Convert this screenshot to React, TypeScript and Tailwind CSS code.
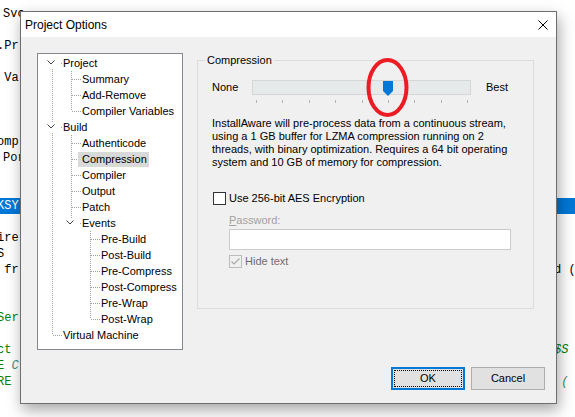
import React from "react";

type Conn = "first" | "tee" | "elbow";
type Row = { label: string; cells: ("pipe" | "blank")[]; conn: Conn; exp?: boolean; selected?: boolean };

const rows: Row[] = [
  { label: "Project", cells: [], conn: "first", exp: true },
  { label: "Summary", cells: ["pipe"], conn: "tee" },
  { label: "Add-Remove", cells: ["pipe"], conn: "tee" },
  { label: "Compiler Variables", cells: ["pipe"], conn: "elbow" },
  { label: "Build", cells: [], conn: "tee", exp: true },
  { label: "Authenticode", cells: ["pipe"], conn: "tee" },
  { label: "Compression", cells: ["pipe"], conn: "tee", selected: true },
  { label: "Compiler", cells: ["pipe"], conn: "tee" },
  { label: "Output", cells: ["pipe"], conn: "tee" },
  { label: "Patch", cells: ["pipe"], conn: "tee" },
  { label: "Events", cells: ["pipe"], conn: "elbow", exp: true },
  { label: "Pre-Build", cells: ["pipe", "blank"], conn: "tee" },
  { label: "Post-Build", cells: ["pipe", "blank"], conn: "tee" },
  { label: "Pre-Compress", cells: ["pipe", "blank"], conn: "tee" },
  { label: "Post-Compress", cells: ["pipe", "blank"], conn: "tee" },
  { label: "Pre-Wrap", cells: ["pipe", "blank"], conn: "tee" },
  { label: "Post-Wrap", cells: ["pipe", "blank"], conn: "elbow" },
  { label: "Virtual Machine", cells: [], conn: "elbow" },
];

const vDots =
  "bg-[repeating-linear-gradient(to_bottom,#a0a0a0_0px,#a0a0a0_1px,transparent_1px,transparent_2px)]";
const hDots =
  "bg-[repeating-linear-gradient(to_right,#a0a0a0_0px,#a0a0a0_1px,transparent_1px,transparent_2px)]";

function Cell({ kind }: { kind: "pipe" | "blank" }) {
  return (
    <div className="relative w-[19px] h-[16px] shrink-0">
      {kind === "pipe" && <div className={`absolute left-[9px] top-0 w-[1px] h-[16px] ${vDots}`} />}
    </div>
  );
}

function Connector({ conn, exp }: { conn: Conn; exp?: boolean }) {
  const top = conn === "tee" || conn === "elbow";
  const bottom = conn === "tee" || conn === "first";
  return (
    <div className="relative w-[19px] h-[16px] shrink-0">
      {top && <div className={`absolute left-[9px] top-0 w-[1px] h-[8px] ${vDots}`} />}
      {bottom && <div className={`absolute left-[9px] top-[8px] w-[1px] h-[8px] ${vDots}`} />}
      {!exp && <div className={`absolute left-[10px] top-[8px] w-[9px] h-[1px] ${hDots}`} />}
      {exp && (
        <>
          <div className="absolute left-[3px] top-[3px] w-[12px] h-[10px] bg-white">
            <svg className="absolute left-[1px] top-[2px]" width="8" height="5" viewBox="0 0 8 5">
              <path d="M0.5 0.5 L4 4 L7.5 0.5" fill="none" stroke="#404040" strokeWidth="1" />
            </svg>
          </div>
          <div className="absolute left-[18px] top-[8px] w-[1px] h-[1px] bg-[#a0a0a0]" />
        </>
      )}
    </div>
  );
}

function Tree() {
  return (
    <div className="w-[146px] h-[297px] shrink-0 border border-[#828790] bg-white pt-[1px] pl-[5px]">
      {rows.map((r) => (
        <div key={r.label} className="flex items-start h-[16px]">
          {r.cells.map((c, i) => (
            <Cell key={i} kind={c} />
          ))}
          <Connector conn={r.conn} exp={r.exp} />
          <span
            className={`relative ml-[-3px] mt-[1px] h-[15px] leading-[14px] pl-[4px] pr-[2px] whitespace-nowrap text-black ${
              r.selected ? "bg-[#d9d9d9]" : ""
            }`}
          >
            {r.label}
          </span>
        </div>
      ))}
    </div>
  );
}

const codeLines: { l: string; r?: string; lc?: string; rc?: string; hl?: boolean; ml?: string }[] = [
  { l: "Svc", ml: "ml-[3px]" },
  { l: "" },
  { l: ".Pr" },
  { l: "" },
  { l: " Va" },
  { l: "" },
  { l: "" },
  { l: "" },
  { l: "omp" },
  { l: "Por", ml: "ml-[3px]" },
  { l: "" },
  { l: "" },
  { l: "KSY", hl: true },
  { l: "" },
  { l: "ire" },
  { l: "S" },
  { l: " fr", r: "d (" },
  { l: "" },
  { l: "" },
  { l: "Ser", lc: "text-[#008000]" },
  { l: "" },
  { l: "ct", lc: "text-[#008000]", r: "$S", rc: "text-[#008000] italic" },
  { l: "E C", lc: "text-[#008000]" },
  { l: "RE", lc: "text-[#008000]", r: " (", rc: "text-[#3c8c6c] italic" },
];

function CodeBackground() {
  return (
    <div className="absolute inset-0 overflow-hidden bg-white pt-[6px] text-[12px] leading-[16px] font-['Liberation_Mono',monospace] text-black">
      {codeLines.map((c, i) => (
        <div key={i} className={`flex h-[16px] whitespace-pre ${c.hl ? "bg-[#0078d7] text-white" : ""}`}>
          <span className={`w-[557px] shrink-0 overflow-hidden ${c.ml ? c.ml : "ml-[-3px]"} ${c.lc ?? ""}`}>
            {c.l === "E C" ? (
              <>
                E <span className="italic text-[#2a8a8a]">C</span>
              </>
            ) : (
              c.l
            )}
          </span>
          {c.r && <span className={c.rc ?? ""}>{c.r}</span>}
        </div>
      ))}
    </div>
  );
}

function Check({ checked, disabled }: { checked?: boolean; disabled?: boolean }) {
  return (
    <span
      className={`relative w-[13px] h-[13px] shrink-0 border ${
        disabled ? "border-[#bcbcbc] bg-[#f0f0f0]" : "border-[#333333] bg-white"
      }`}
    >
      {checked && (
        <svg className="absolute left-0 top-0" width="11" height="11" viewBox="0 0 11 11">
          <path d="M1.5 5.5 L4 8 L9.5 2.5" fill="none" stroke={disabled ? "#a8a8a8" : "#000"} strokeWidth="1.1" />
        </svg>
      )}
    </span>
  );
}

function Slider() {
  const ticks = Array.from({ length: 9 });
  return (
    <div className="flex flex-col">
      <div className="relative w-[219px] h-[15px] bg-[#e7eaea] border border-[#d6d6d6]">
        <svg className="absolute left-[130px] top-0" width="10" height="15" viewBox="0 0 10 15">
          <path d="M0 0 H10 V10 L5 15 L0 10 Z" fill="#0078d7" />
        </svg>
      </div>
      <div className="ml-[4px] mt-[5px] w-[212px] h-[3px] flex justify-between">
        {ticks.map((_, i) => (
          <div key={i} className="w-[1px] h-[3px] bg-[#b4b4b4]" />
        ))}
      </div>
    </div>
  );
}

export default function App() {
  return (
    <div className="relative w-[575px] h-[417px] overflow-hidden bg-white font-['Liberation_Sans',Arial,sans-serif] text-[11px]">
      <CodeBackground />

      {/* dialog window */}
      <div className="absolute left-[20px] top-[11px] w-[537px] h-[393px] border border-[#6e6e6e] bg-[#f0f0f0] shadow-[2px_6px_14px_rgba(0,0,0,0.35)] flex flex-col">
        <div className="h-[25px] shrink-0 bg-white flex items-center justify-between pl-[4px]">
          <span className="text-[12px] text-black">Project Options</span>
          <svg className="mr-[8px]" width="10" height="10" viewBox="0 0 10 10">
            <path d="M0.5 0.5 L9.5 9.5 M9.5 0.5 L0.5 9.5" stroke="#000" strokeWidth="1" />
          </svg>
        </div>

        <div className="flex flex-col pl-[16px] pr-[11px] pt-[16px]">
          <div className="flex items-start gap-[14px]">
            <Tree />

            <fieldset className="w-[337px] h-[256px] shrink-0 border border-[#dcdcdc]">
              <legend className="ml-[7px] px-[2px] h-[14px] leading-[14px] text-black">Compression</legend>

              <div className="mt-[13px] flex items-start">
                <span className="ml-[14px] w-[40px] h-[15px] leading-[15px] text-black">None</span>
                <Slider />
                <span className="ml-[15px] h-[15px] leading-[15px] text-black">Best</span>
              </div>

              <p className="mt-[14px] ml-[14px] leading-[13px] text-black whitespace-nowrap">
                InstallAware will pre-process data from a continuous stream,
                <br />
                using a 1 GB buffer for LZMA compression running on 2
                <br />
                threads, with binary optimization. Requires a 64 bit operating
                <br />
                system and 10 GB of memory for compression.
              </p>

              <div className="mt-[23px] ml-[15px] flex items-center gap-[3px] h-[13px]">
                <Check />
                <span className="leading-[13px] text-black">Use 256-bit AES Encryption</span>
              </div>

              <div className="mt-[9px] ml-[31px] leading-[13px] text-[#a0a0a0]">
                <span className="underline">P</span>assword:
              </div>

              <div className="mt-[2px] ml-[31px] w-[282px] h-[21px] border border-[#cccccc] bg-white" />

              <div className="mt-[5px] ml-[31px] flex items-center gap-[3px] h-[13px]">
                <Check checked disabled />
                <span className="leading-[13px] text-[#6d6d6d]">Hide text</span>
              </div>
            </fieldset>
          </div>

          <div className="mt-[17px] flex justify-end gap-[6px]">
            <button className="w-[74px] h-[23px] border-2 border-[#0078d7] bg-[#e1e1e1] p-[1px]">
              <span className="flex w-full h-full items-center justify-center border border-dotted border-black text-black">
                OK
              </span>
            </button>
            <button className="w-[74px] h-[23px] border border-[#adadad] bg-[#e1e1e1] flex items-center justify-center text-black">
              Cancel
            </button>
          </div>
        </div>
      </div>

      {/* red annotation ellipse */}
      <svg className="absolute left-[364px] top-[56px]" width="48" height="64" viewBox="0 0 48 64">
        <ellipse cx="23.5" cy="31.5" rx="19" ry="27.5" fill="none" stroke="#ec1c24" strokeWidth="4" />
      </svg>
    </div>
  );
}
